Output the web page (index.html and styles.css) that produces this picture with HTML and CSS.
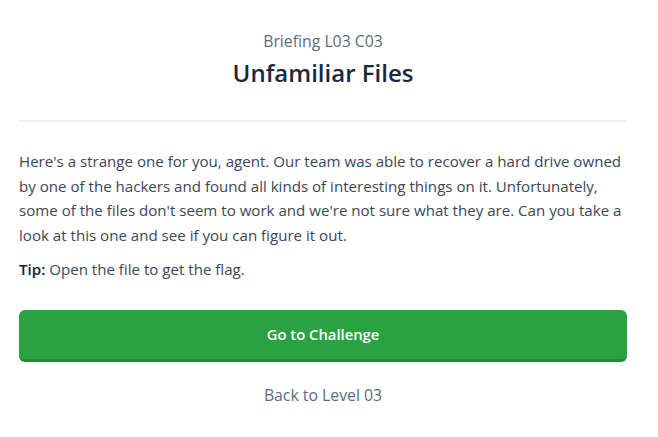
FILE: index.html
```html
<!DOCTYPE html>
<html>
<head>
<meta charset="utf-8">
<link rel="stylesheet" href="styles.css">
</head>
<body>
<main class="briefing">
  <header class="head">
    <div class="kicker">Briefing L03 C03</div>
    <h1 class="title">Unfamiliar Files</h1>
  </header>
  <section class="body">
    <p class="text">Here's a strange one for you, agent. Our team was able to recover a hard drive owned by one of the hackers and found all kinds of interesting things on it. Unfortunately, some of the files don't seem to work and we're not sure what they are. Can you take a look at this one and see if you can figure it out.</p>
    <p class="tip"><strong>Tip:</strong> Open the file to get the flag.</p>
  </section>
  <a class="btn" href="#">Go to Challenge</a>
  <a class="back" href="#">Back to Level 03</a>
</main>
</body>
</html>
```
FILE: styles.css
```css
html, body { margin: 0; padding: 0; background: #fff; }
body { font-family: "Open Sans", "Lato", sans-serif; color: #3a4556; }
.briefing { padding: 30px 31px 0 19px; display: flex; flex-direction: column; }
.head { text-align: center; border-bottom: 2px solid #eef0f3; padding-bottom: 32px; }
.kicker { font-size: 15.8px; color: #5b6b80; line-height: 22px; font-weight: 500; }
.title { margin: 6px 0 0; font-size: 24px; font-weight: 600; color: #1a2740; line-height: 30px; }
.body { padding-top: 27px; }
.text { margin: 0; font-size: 15.1px; line-height: 24.7px; color: #3b4658; }
.tip { margin: 9px 0 0; font-size: 15.1px; line-height: 24px; color: #3b4658; }
.tip strong { color: #16233b; font-weight: 600; }
.btn { margin-top: 29px; display: flex; align-items: center; justify-content: center; height: 49px; background: #2aa241; border-bottom: 3px solid #228a36; border-radius: 6px; color: #fff; font-weight: 600; font-size: 14.8px; text-decoration: none; }
.back { margin-top: 22px; text-align: center; font-size: 15.8px; color: #5b6b80; text-decoration: none; font-weight: 500; }
```
